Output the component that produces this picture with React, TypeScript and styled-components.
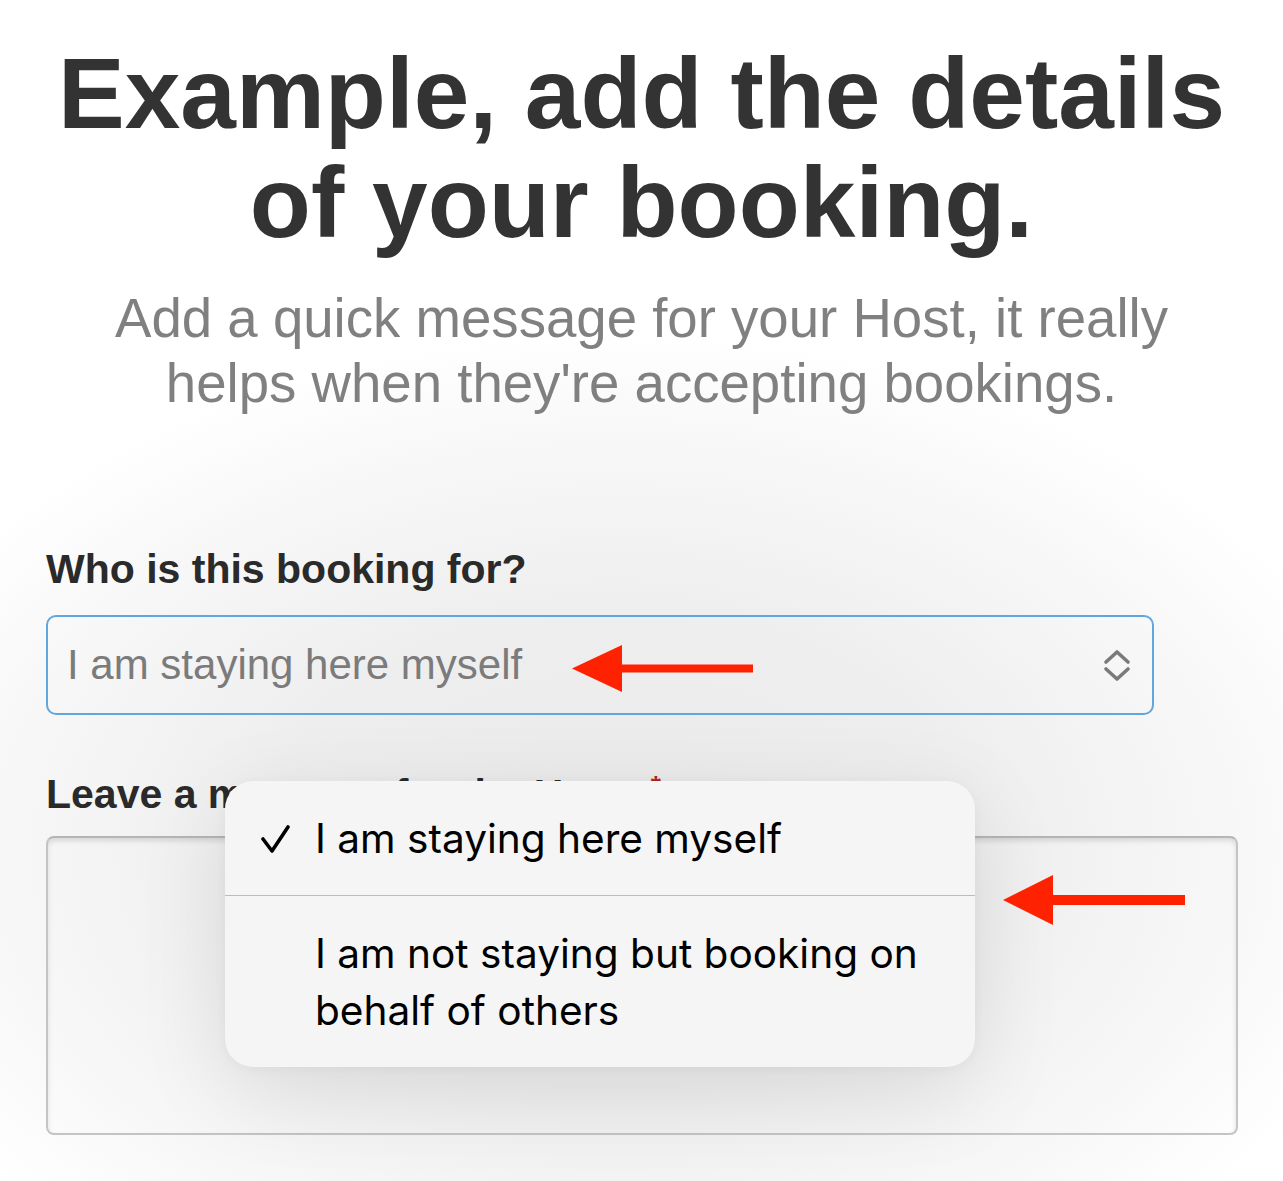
import React from "react";
import styled, { createGlobalStyle } from "styled-components";

const GlobalStyle = createGlobalStyle`
  html, body {
    margin: 0;
    padding: 0;
  }
  body {
    font-family: "Liberation Sans", Arial, sans-serif;
    background: #fff;
  }
`;

const Page = styled.main`
  width: 1283px;
  min-height: 1181px;
  box-sizing: border-box;
  padding-top: 39px;
  overflow: hidden;
  background: radial-gradient(
    ellipse 62% 44% at 48% 72%,
    #eaeaea 0%,
    #eeeeee 45%,
    #f8f8f8 80%,
    #ffffff 100%
  );
`;

const Title = styled.h1`
  margin: 0;
  font-size: 100px;
  line-height: 109px;
  font-weight: 700;
  color: #333333;
  text-align: center;
`;

const Subtitle = styled.p`
  margin: 29px 0 0;
  font-size: 54.6px;
  line-height: 65px;
  color: #808080;
  text-align: center;
`;

const Form = styled.section`
  position: relative;
  margin: 129px 0 0 46px;
`;

const Label = styled.h2<{ $gap?: number }>`
  margin: ${(p) => p.$gap ?? 0}px 0 0;
  font-size: 41px;
  line-height: 48px;
  font-weight: 700;
  color: #2a2a2a;
`;

const Required = styled.span`
  position: relative;
  top: -14px;
  margin-left: 26px;
  font-size: 26px;
  line-height: 0;
  color: #b3261e;
`;

const Select = styled.div`
  position: relative;
  margin-top: 22px;
  width: 1108px;
  height: 100px;
  box-sizing: border-box;
  border: 2px solid #62a6de;
  border-radius: 10px;
  display: flex;
  align-items: center;
  padding: 0 21px 0 19px;
`;

const SelectValue = styled.span`
  font-size: 42px;
  line-height: 50px;
  color: #7b7b7b;
`;

const Chevrons = styled.svg`
  margin-left: auto;
`;

const TextArea = styled.div`
  margin-top: 18px;
  width: 1192px;
  height: 299px;
  box-sizing: border-box;
  border: 2px solid #c4c4c4;
  border-top-color: #b5b5b5;
  border-radius: 8px;
  box-shadow: inset 0 3px 5px rgba(0, 0, 0, 0.12);
`;

const Picker = styled.ul`
  position: absolute;
  top: 236px;
  left: 179px;
  width: 750px;
  margin: 0;
  padding: 0;
  list-style: none;
  border-radius: 28px;
  background: #f5f5f5;
  box-shadow: 0 24px 90px rgba(0, 0, 0, 0.1), 0 2px 12px rgba(0, 0, 0, 0.04);
  font-family: Inter, "Noto Sans", sans-serif;
  overflow: hidden;
`;

const Option = styled.li<{ $divider?: boolean }>`
  display: grid;
  grid-template-columns: 55px 1fr;
  padding: 29px 20px 28px 35px;
  font-size: 40.6px;
  line-height: 57px;
  color: #000;
  border-top: ${(p) => (p.$divider ? "1px solid #bdbdbd" : "none")};
`;

const Check = styled.svg`
  margin-top: 15px;
`;

const Pointer = styled.div<{ $top: number; $left: number }>`
  position: absolute;
  top: ${(p) => p.$top}px;
  left: ${(p) => p.$left}px;
  line-height: 0;
`;

function RedArrow({ w, h, t }: { w: number; h: number; t: number }) {
  const head = 50;
  return (
    <svg width={w} height={h} viewBox={`0 0 ${w} ${h}`}>
      <polygon points={`0,${h / 2} ${head},0 ${head},${h}`} fill="#ff2200" />
      <rect x={head - 1} y={(h - t) / 2} width={w - head + 1} height={t} fill="#ff2200" />
    </svg>
  );
}

export default function App() {
  return (
    <Page>
      <GlobalStyle />
      <Title>
        Example, add the details
        <br />
        of your booking.
      </Title>
      <Subtitle>
        Add a quick message for your Host, it really
        <br />
        helps when they're accepting bookings.
      </Subtitle>

      <Form>
        <Label>Who is this booking for?</Label>
        <Select>
          <SelectValue>I am staying here myself</SelectValue>
          <Chevrons width="28" height="33" viewBox="0 0 28 33" fill="none">
            <path
              d="M3 13 L14 3 L25 13 M3 20 L14 30 L25 20"
              stroke="#7a7a7a"
              strokeWidth="3.6"
              strokeLinecap="round"
              strokeLinejoin="round"
            />
          </Chevrons>
          <Pointer $top={28} $left={524}>
            <RedArrow w={181} h={47} t={8} />
          </Pointer>
        </Select>

        <Label $gap={55}>
          Leave a message for the Host
          <Required>*</Required>
        </Label>
        <TextArea />

        <Picker>
          <Option>
            <Check width="30" height="29" viewBox="0 0 30 29" fill="none">
              <path
                d="M3 14 L12 26 L28 2"
                stroke="#000"
                strokeWidth="3.6"
                strokeLinecap="round"
                strokeLinejoin="round"
              />
            </Check>
            <span>I am staying here myself</span>
          </Option>
          <Option $divider>
            <span />
            <span>I am not staying but booking on behalf of others</span>
          </Option>
        </Picker>

        <Pointer $top={330} $left={957}>
          <RedArrow w={182} h={50} t={10} />
        </Pointer>
      </Form>
    </Page>
  );
}
